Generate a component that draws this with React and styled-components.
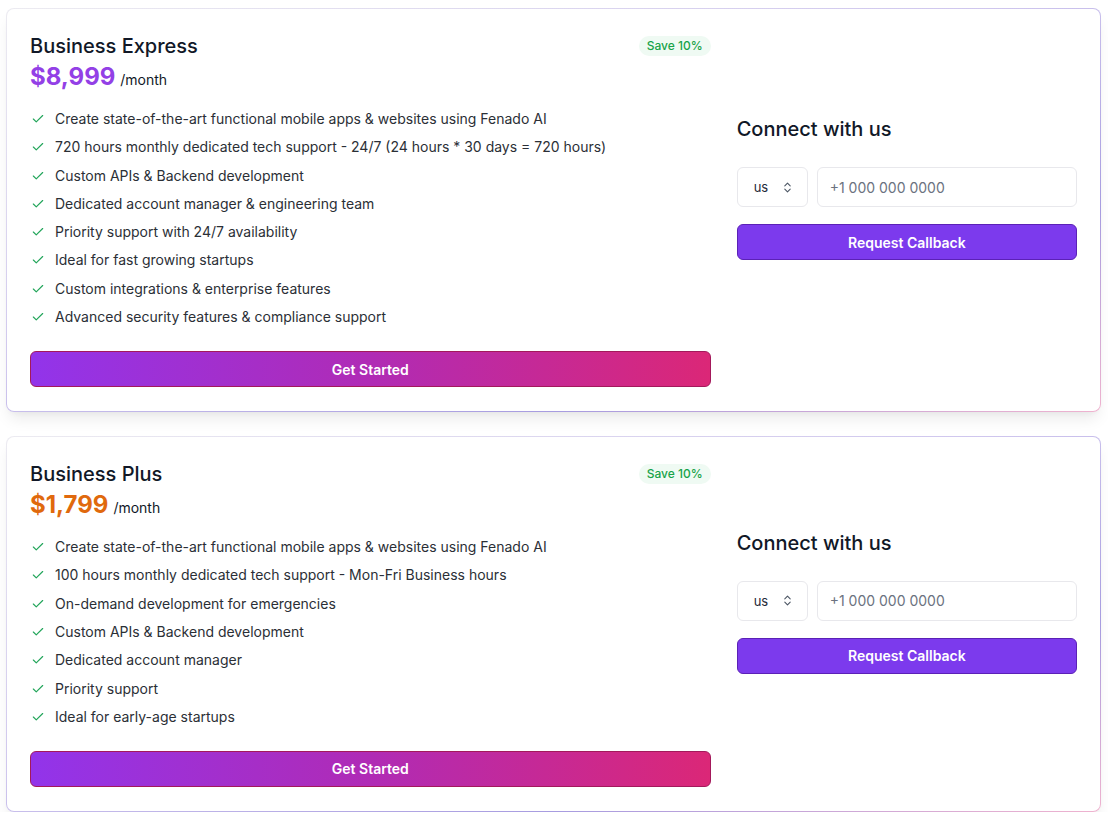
import React from "react";
import styled, { createGlobalStyle } from "styled-components";
import { Check, ChevronsUpDown } from "lucide-react";

const GlobalStyle = createGlobalStyle`
  html, body {
    margin: 0;
    padding: 0;
    background: #ffffff;
    font-family: Inter, "Noto Sans", "Liberation Sans", sans-serif;
    color: #111827;
  }
  * {
    box-sizing: border-box;
  }
`;

const plans = [
  {
    name: "Business Express",
    price: "$8,999",
    priceColor: "#9340e6",
    features: [
      "Create state-of-the-art functional mobile apps & websites using Fenado AI",
      "720 hours monthly dedicated tech support - 24/7 (24 hours * 30 days = 720 hours)",
      "Custom APIs & Backend development",
      "Dedicated account manager & engineering team",
      "Priority support with 24/7 availability",
      "Ideal for fast growing startups",
      "Custom integrations & enterprise features",
      "Advanced security features & compliance support",
    ],
  },
  {
    name: "Business Plus",
    price: "$1,799",
    priceColor: "#e0690d",
    features: [
      "Create state-of-the-art functional mobile apps & websites using Fenado AI",
      "100 hours monthly dedicated tech support - Mon-Fri Business hours",
      "On-demand development for emergencies",
      "Custom APIs & Backend development",
      "Dedicated account manager",
      "Priority support",
      "Ideal for early-age startups",
    ],
  },
];

const Page = styled.div`
  display: flex;
  flex-direction: column;
  gap: 24px;
  padding: 8px 7px 0 6px;
`;

const Card = styled.div`
  display: grid;
  grid-template-columns: 2fr 1fr;
  gap: 26px;
  padding: 23px 23px 24px 23px;
  border: 1px solid transparent;
  border-radius: 8px;
  background:
    linear-gradient(#ffffff, #ffffff) padding-box,
    linear-gradient(to bottom right, #ecebf1 0%, #cfc6ee 45%, #a79ce0 75%, #efb3cf 100%) border-box;
  box-shadow: 0 10px 15px -3px rgba(0, 0, 0, 0.08), 0 4px 6px -4px rgba(0, 0, 0, 0.06);
`;

const Details = styled.div`
  display: flex;
  flex-direction: column;
`;

const Header = styled.div`
  display: flex;
  justify-content: space-between;
  align-items: flex-start;
`;

const Title = styled.h3`
  margin: 0;
  font-size: 20px;
  line-height: 28px;
  font-weight: 500;
  color: #111827;
`;

const Badge = styled.span`
  margin-top: 4px;
  padding: 2px 8px;
  border-radius: 9999px;
  background: #effaf3;
  color: #17a34a;
  font-size: 12px;
  line-height: 16px;
  font-weight: 500;
`;

const PriceRow = styled.div`
  display: flex;
  align-items: baseline;
  gap: 5px;
  margin-top: 1px;
`;

const Price = styled.span`
  font-size: 24px;
  line-height: 32px;
  font-weight: 700;
  color: ${(p) => p.$color};
`;

const Period = styled.span`
  font-size: 14px;
  color: #111827;
`;

const FeatureList = styled.ul`
  list-style: none;
  margin: 16px 0 0;
  padding: 0;
  display: flex;
  flex-direction: column;
  gap: 8.3px;
`;

const Feature = styled.li`
  display: flex;
  align-items: center;
  gap: 10px;
  font-size: 14px;
  line-height: 20px;
  color: #2b2f36;
  svg {
    flex-shrink: 0;
    margin-left: 1px;
    color: #22a55a;
  }
`;

const StartButton = styled.button`
  margin-top: 24px;
  height: 36px;
  width: 100%;
  border: 1px solid #a3195b;
  border-radius: 6px;
  background: linear-gradient(to right, #9234ea, #b02bb5 50%, #db2777);
  color: #ffffff;
  font-family: inherit;
  font-size: 14px;
  font-weight: 600;
  cursor: pointer;
`;

const Connect = styled.div`
  align-self: center;
  display: flex;
  flex-direction: column;
`;

const ConnectTitle = styled.h4`
  margin: 0 0 24px;
  font-size: 20px;
  line-height: 28px;
  font-weight: 500;
  color: #111827;
`;

const InputRow = styled.div`
  display: flex;
  gap: 9px;
`;

const CountrySelect = styled.div`
  width: 71px;
  height: 40px;
  display: flex;
  align-items: center;
  gap: 13px;
  padding-left: 16px;
  border: 1px solid #e8e8ec;
  border-radius: 6px;
  font-size: 13px;
  color: #1f2937;
  svg {
    color: #4b5563;
  }
`;

const PhoneInput = styled.input`
  flex: 1;
  height: 40px;
  min-width: 0;
  padding: 0 12px;
  border: 1px solid #e8e8ec;
  border-radius: 6px;
  font-family: inherit;
  font-size: 14px;
  color: #111827;
  outline: none;
  &::placeholder {
    color: #6b7280;
  }
`;

const CallbackButton = styled.button`
  margin-top: 17px;
  height: 36px;
  width: 100%;
  border: 1px solid #5b21b6;
  border-radius: 6px;
  background: #7c3aed;
  color: #ffffff;
  font-family: inherit;
  font-size: 14px;
  font-weight: 600;
  cursor: pointer;
`;

const Message = styled.div`
  margin-top: 16px;
  min-height: 28px;
  font-size: 12px;
  color: #9ca3af;
`;

const PlanCard = ({ plan }) => (
  <Card>
    <Details>
      <Header>
        <Title>{plan.name}</Title>
        <Badge>Save 10%</Badge>
      </Header>
      <PriceRow>
        <Price $color={plan.priceColor}>{plan.price}</Price>
        <Period>/month</Period>
      </PriceRow>
      <FeatureList>
        {plan.features.map((f) => (
          <Feature key={f}>
            <Check size={14} strokeWidth={2} />
            {f}
          </Feature>
        ))}
      </FeatureList>
      <StartButton>Get Started</StartButton>
    </Details>
    <Connect>
      <ConnectTitle>Connect with us</ConnectTitle>
      <InputRow>
        <CountrySelect>
          us
          <ChevronsUpDown size={13} strokeWidth={2} />
        </CountrySelect>
        <PhoneInput placeholder="+1 000 000 0000" />
      </InputRow>
      <CallbackButton>Request Callback</CallbackButton>
      <Message />
    </Connect>
  </Card>
);

export default function App() {
  return (
    <>
      <GlobalStyle />
      <Page>
        {plans.map((plan) => (
          <PlanCard key={plan.name} plan={plan} />
        ))}
      </Page>
    </>
  );
}
